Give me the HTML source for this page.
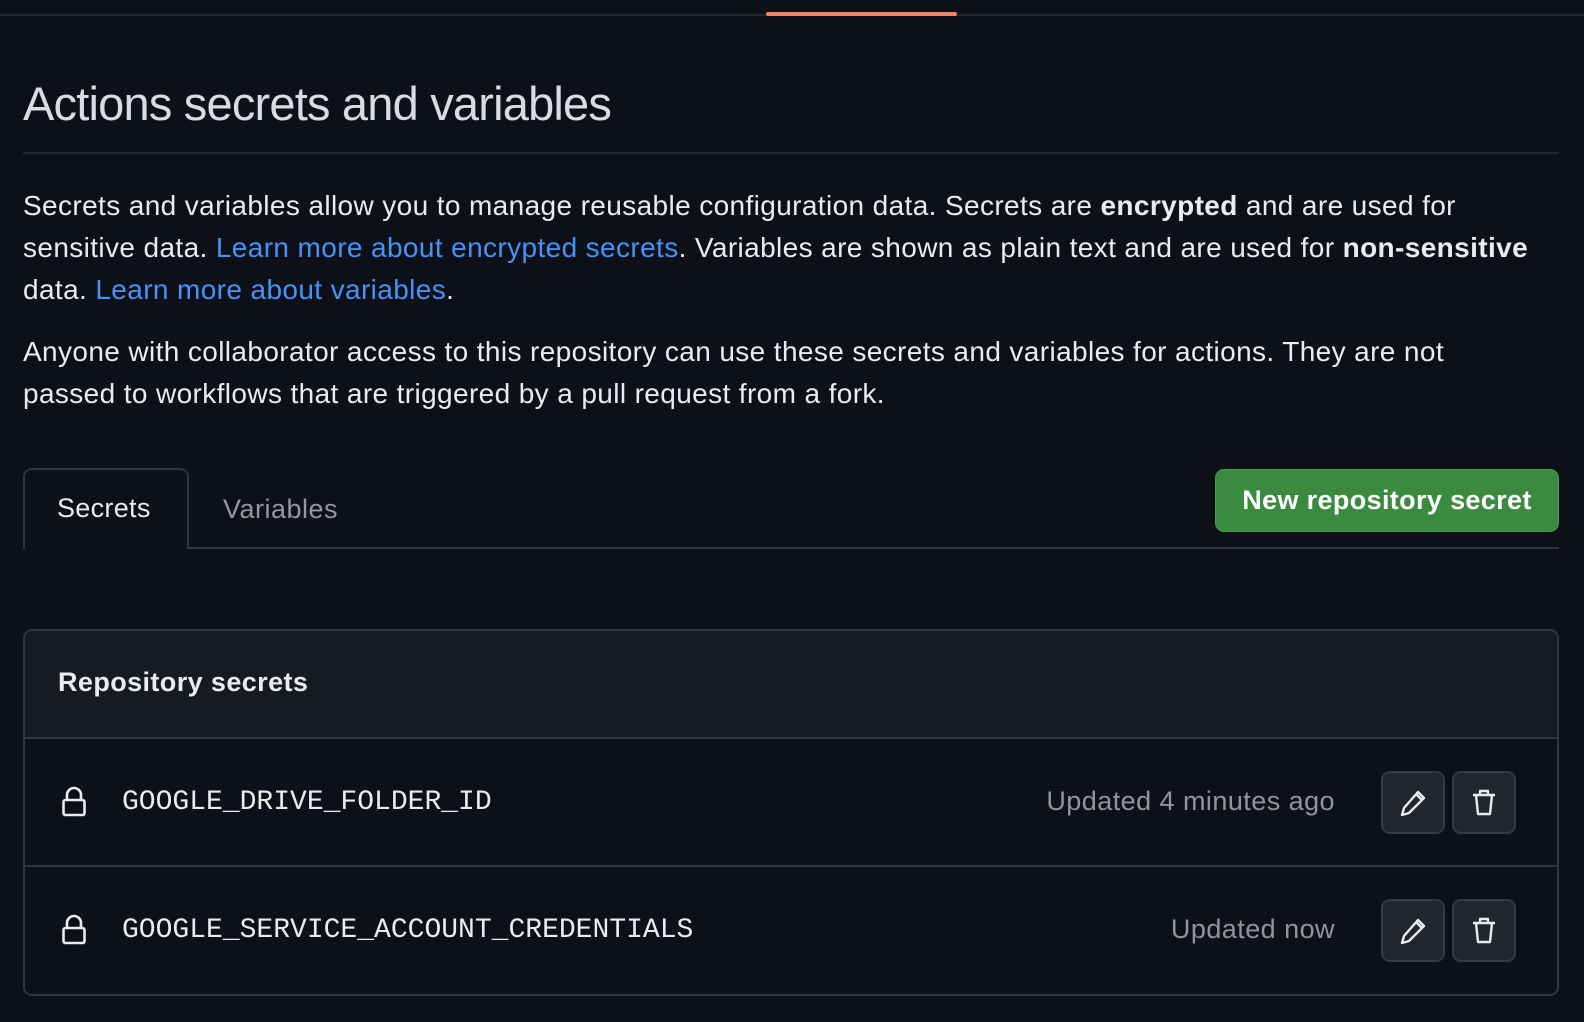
<!DOCTYPE html>
<html><head><meta charset="utf-8"><style>
*{box-sizing:border-box;margin:0;padding:0}
body{width:1584px;height:1022px;background:#0d1117;color:#e6edf3;font-family:"Liberation Sans",sans-serif;position:relative;overflow:hidden}
.abs{position:absolute}
.line{white-space:nowrap;font-size:28px;letter-spacing:0.38px;position:absolute;left:23px}
a{color:#4493f8;text-decoration:none}
b{font-weight:bold}
.mono{font-family:"Liberation Mono",monospace;font-size:28px;color:#e6edf3}
.upd{font-size:27px;letter-spacing:0.45px;color:#8d96a0;position:absolute;white-space:nowrap}
.btn{position:absolute;width:64px;height:63px;background:#21262d;border:2px solid #363b42;border-radius:9px;display:flex;align-items:center;justify-content:center}
</style></head><body>
<div class="abs" style="left:0;top:14px;width:1584px;height:2px;background:#21262d"></div>
<div class="abs" style="left:766px;top:12px;width:191px;height:4px;background:#f78166;border-radius:2px"></div>
<div class="abs" style="left:23px;top:76px;font-size:47px;color:#d7dde4;white-space:nowrap;letter-spacing:-0.8px">Actions secrets and variables</div>
<div class="abs" style="left:23px;top:152px;width:1536px;height:2px;background:#21262d"></div>
<div class="line" style="top:190px">Secrets and variables allow you to manage reusable configuration data. Secrets are <b>encrypted</b> and are used for</div>
<div class="line" style="top:232px">sensitive data. <a>Learn more about encrypted secrets</a>. Variables are shown as plain text and are used for <b>non-sensitive</b></div>
<div class="line" style="top:274px">data. <a>Learn more about variables</a>.</div>
<div class="line" style="top:336px">Anyone with collaborator access to this repository can use these secrets and variables for actions. They are not</div>
<div class="line" style="top:378px">passed to workflows that are triggered by a pull request from a fork.</div>
<div class="abs" style="left:23px;top:547px;width:1536px;height:2px;background:#30363d"></div>
<div class="abs" style="left:23px;top:468px;width:166px;height:81px;border:2px solid #30363d;border-bottom:none;border-radius:9px 9px 0 0;background:#0d1117;font-size:27px;letter-spacing:0.3px;padding:23px 0 0 32px">Secrets</div>
<div class="abs" style="left:223px;top:494px;font-size:27px;letter-spacing:0.5px;color:#9198a1">Variables</div>
<div class="abs" style="left:1215px;top:469px;width:344px;height:63px;background:#3a8a3f;border:1px solid #4a9a4f;border-radius:9px;color:#fff;font-size:27px;letter-spacing:0.35px;font-weight:bold;display:flex;align-items:center;justify-content:center;white-space:nowrap">New repository secret</div>
<div class="abs" style="left:23px;top:629px;width:1536px;height:367px;border:2px solid #30363d;border-radius:9px;overflow:hidden">
 <div style="height:108px;background:#161b22;border-bottom:2px solid #30363d;font-size:27px;letter-spacing:0.4px;font-weight:bold;padding:36px 0 0 33px">Repository secrets</div>
 <div style="height:128px;border-bottom:2px solid #30363d;position:relative">
  <svg class="abs" style="left:36px;top:47px" width="26" height="32" viewBox="0 0 26 32" fill="none" stroke="#e6edf3" stroke-width="2.6"><path d="M6 14V9a7 7 0 0 1 14 0v5"/><rect x="2.5" y="14" width="21" height="15" rx="2"/></svg>
  <div class="mono abs" style="left:97px;top:48px">GOOGLE_DRIVE_FOLDER_ID</div>
  <div class="upd" style="right:222px;top:47px">Updated 4 minutes ago</div>
  <div class="btn" style="left:1356px;top:32px"><svg width="30" height="30" viewBox="0 0 30 30" fill="none" stroke="#e6edf3" stroke-width="2.4" stroke-linejoin="round"><path d="M20 4l6 6L11 25l-7 2 2-7z M18 6l6 6"/></svg></div>
  <div class="btn" style="left:1427px;top:32px"><svg width="30" height="32" viewBox="0 0 30 32" fill="none" stroke="#e6edf3" stroke-width="2.4" stroke-linejoin="round"><path d="M4 8h22 M11 8V4h8v4 M7 8l2 19h12l2-19"/></svg></div>
 </div>
 <div style="height:128px;position:relative">
  <svg class="abs" style="left:36px;top:47px" width="26" height="32" viewBox="0 0 26 32" fill="none" stroke="#e6edf3" stroke-width="2.6"><path d="M6 14V9a7 7 0 0 1 14 0v5"/><rect x="2.5" y="14" width="21" height="15" rx="2"/></svg>
  <div class="mono abs" style="left:97px;top:48px">GOOGLE_SERVICE_ACCOUNT_CREDENTIALS</div>
  <div class="upd" style="right:222px;top:47px">Updated now</div>
  <div class="btn" style="left:1356px;top:32px"><svg width="30" height="30" viewBox="0 0 30 30" fill="none" stroke="#e6edf3" stroke-width="2.4" stroke-linejoin="round"><path d="M20 4l6 6L11 25l-7 2 2-7z M18 6l6 6"/></svg></div>
  <div class="btn" style="left:1427px;top:32px"><svg width="30" height="32" viewBox="0 0 30 32" fill="none" stroke="#e6edf3" stroke-width="2.4" stroke-linejoin="round"><path d="M4 8h22 M11 8V4h8v4 M7 8l2 19h12l2-19"/></svg></div>
 </div>
</div>
</body></html>
